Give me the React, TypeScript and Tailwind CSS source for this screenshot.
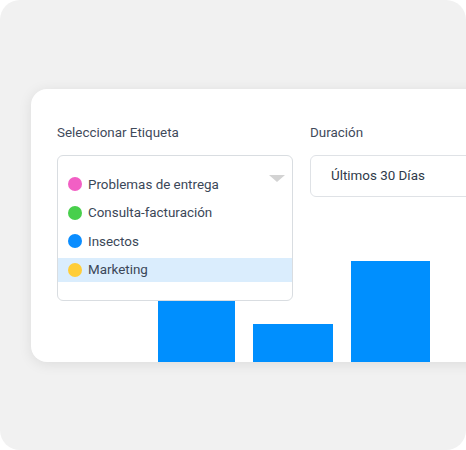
import React from "react";

const tags = [
  { name: "Problemas de entrega", color: "bg-[#f25fc4]" },
  { name: "Consulta-facturación", color: "bg-[#48cf4c]" },
  { name: "Insectos", color: "bg-[#0a8dff]" },
  { name: "Marketing", color: "bg-[#ffcd38]", active: true },
];

const bars = [
  { height: 85, width: "w-[77px]" },
  { height: 38, width: "w-[80px]" },
  { height: 101, width: "w-[79px]" },
];

const App = () => {
  return (
    <div className="w-[466px] h-[450px] bg-white" style={{ fontFamily: "Roboto, 'Liberation Sans', sans-serif" }}>
      <div className="w-[466px] h-[450px] bg-[#f1f1f1] rounded-[20px] overflow-hidden pt-[89px] pl-[31px]">
        <div className="w-[480px] h-[273px] bg-white rounded-2xl shadow-[0_2px_14px_rgba(0,0,0,0.09)] overflow-hidden flex flex-col">
          <div className="flex pl-[26px] pt-9 gap-[17px]">
            {/* tag select */}
            <div className="w-[236px] flex flex-col">
              <span className="text-[13.4px] leading-4 text-[#3f4a5b] mb-[14px]">Seleccionar Etiqueta</span>
              <div className="relative h-[42px]">
                <div className="absolute z-10 left-0 top-0 w-[236px] h-[146px] bg-white border border-[#d9dde1] rounded-md pt-4">
                  <div className="absolute left-[211px] top-[19px] w-0 h-0 border-l-[8px] border-r-[8px] border-t-[7px] border-l-transparent border-r-transparent border-t-[#d3d3d3]" />
                  <ul className="flex flex-col gap-[4.5px]">
                    {tags.map((t) => (
                      <li
                        key={t.name}
                        className={`h-6 flex items-center pl-[10px] gap-[6px] ${t.active ? "bg-[#daedfd]" : ""}`}
                      >
                        <span className={`w-[14px] h-[14px] rounded-full ${t.color}`} />
                        <span className="text-[13.4px] leading-6 pt-px text-[#3b4758]">{t.name}</span>
                      </li>
                    ))}
                  </ul>
                </div>
              </div>
            </div>
            {/* duration */}
            <div className="w-[200px] flex flex-col">
              <span className="text-[13.4px] leading-4 text-[#3f4a5b] mb-[14px]">Duración</span>
              <div className="h-[42px] border border-[#dfe2e6] rounded-md flex items-center pl-5">
                <span className="text-[13.4px] text-[#2f3a4a]">Últimos 30 Días</span>
              </div>
            </div>
          </div>
          <div className="flex-1 flex items-end ml-[127px] gap-[18px]">
            {bars.map((b, i) => (
              <div key={i} className={`${b.width} bg-[#008ffe]`} style={{ height: b.height }} />
            ))}
          </div>
        </div>
      </div>
    </div>
  );
};

export default App;
